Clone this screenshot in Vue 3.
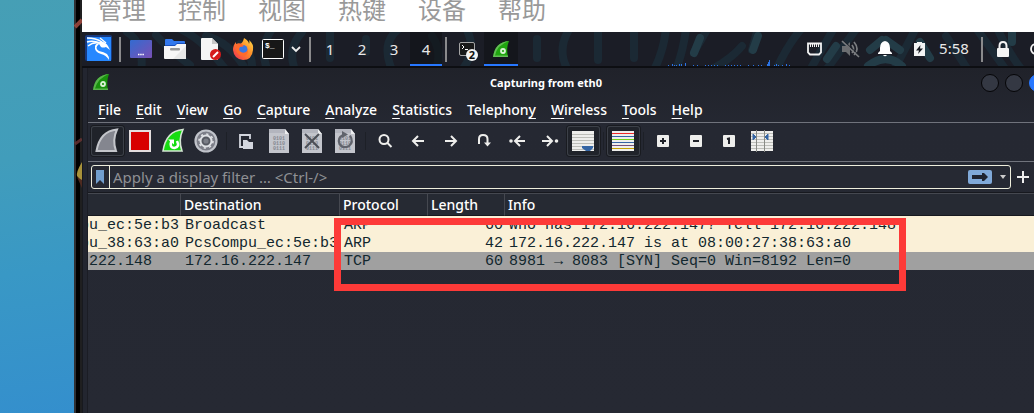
<script setup>
import { ref } from 'vue'

const hostMenu = ['管理', '控制', '视图', '热键', '设备', '帮助']
const workspaces = [1, 2, 3, 4]
const activeWorkspace = ref(4)
const filter = ref('')

const menus = [
  'File', 'Edit', 'View', 'Go', 'Capture', 'Analyze',
  'Statistics', 'Telephony', 'Wireless', 'Tools', 'Help'
].map((label) => {
  const at = label === 'Telephony' ? 8 : 0
  return { label, before: label.slice(0, at), key: label[at], after: label.slice(at + 1) }
})

const packets = [
  { kind: 'arp', source: 'PcsCompu_ec:5e:b3', destination: 'Broadcast', protocol: 'ARP', length: 60, info: 'Who has 172.16.222.147? Tell 172.16.222.148' },
  { kind: 'arp', source: 'PcsCompu_38:63:a0', destination: 'PcsCompu_ec:5e:b3', protocol: 'ARP', length: 42, info: '172.16.222.147 is at 08:00:27:38:63:a0' },
  { kind: 'tcp', source: '172.16.222.148', destination: '172.16.222.147', protocol: 'TCP', length: 60, info: '8981 → 8083 [SYN] Seq=0 Win=8192 Len=0' }
]

const stripes = ['#ef2929', '#3465a4', '#73d216', '#3465a4', '#75507b', '#c4a000']

const load = [
  [0, 1], [4, 2], [6, 1], [8, 1], [11, 2], [13, 2], [17, 3], [25, 1], [29, 1], [37, 1], [40, 1], [43, 1],
  [46, 1], [49, 1], [57, 1], [60, 1], [63, 1], [66, 1], [69, 1], [72, 1], [80, 1], [85, 1], [90, 1], [93, 1],
  [99, 2], [100, 4], [101, 6], [106, 1], [108, 2], [110, 1], [114, 1], [118, 2], [121, 1]
]
</script>

<template>
  <div class="screen">
    <div class="desktop"></div>
    <div class="bezel">
      <svg width="8" height="413" aria-hidden="true">
        <path d="M1 27 L8 20" stroke="#a44a40" stroke-width="4" opacity=".85" />
        <path d="M1 144 L8 139" stroke="#6d3535" stroke-width="3" opacity=".8" />
        <path d="M8 162 Q2 172 3 176 Q7 180 8 186 Z" fill="#a8923a" />
        <path d="M3 177 L8 180 V188 Z" fill="#4d2a20" />
      </svg>
    </div>
    <div class="vm">
      <nav class="host-menu" aria-label="虚拟机">
        <button v-for="m in hostMenu" :key="m" type="button">{{ m }}</button>
      </nav>

      <div class="panel">
        <svg class="wallpaper" viewBox="0 0 952 34" preserveAspectRatio="xMinYMin slice" aria-hidden="true">
          <g fill="none" stroke-linecap="round" stroke-width="8">
            <g stroke="#1b2934">
              <path d="M45 0 q18 12 14 40M74 3 q12 14 34 30M96 -4 q24 10 48 42M124 4 q24 6 40 34M158 12 q14 10 12 28M190 -3 q-14 20 -4 42M220 0 q-16 18 -6 40" />
              <path d="M248 -4 V26M284 7 V20M318 -4 q-20 14 -8 42M350 4 q12 18 2 36M384 -4 q12 22 -4 42M455 7 V26M488 -4 q-14 22 -2 42M516 -4 V28" />
              <path d="M552 -4 V26M584 -4 q-2 22 -12 42M604 -4 q-2 20 -10 42M626 -4 L612 20M676 -4 L670 18M660 14 q-10 12 -28 22M720 -4 q-14 16 -26 42M752 -4 L728 38M775 -4 L744 38" />
              <path d="M834 -4 L812 38M864 4 L886 38M894 -4 L924 38M916 -2 q10 22 24 40" />
            </g>
            <g stroke="#233c47">
              <path d="M612 21 L618 6M671 18 L676 4M745 27 L754 14M788 18 L800 8 M804 8 L818 18M786 34 q18 -14 34 0M848 26 L838 10M930 -4 V10" />
            </g>
          </g>
        </svg>
        <div class="panel-row">
          <button class="kali" type="button" aria-label="Applications">
            <svg width="34" height="34" viewBox="0 0 34 34">
              <rect x="3" y="3" width="27" height="26" rx="2" fill="#1555d6" opacity=".5" />
              <rect x="5" y="5" width="24" height="24" fill="#2788ff" />
              <path d="M5 6 Q14 6 20 10M5 10 Q11 8 18 11M6 14 Q11 10 17 11" fill="none" stroke="#fff" stroke-width="1.4" />
              <path d="M18 9 Q24 10 26 14 L28 18 L24 15 Q21 16 19 15 L17 12 Q12 16 17 19 Q22 20 25 22 Q27 24 27 28 Q24 23 19 22 Q12 20 13 14 Q14 11 18 11 Z" fill="#fff" />
              <path d="M18 6 L24 11" stroke="#fff" stroke-width="1.4" />
            </svg>
          </button>
          <span class="sep"></span>
          <button class="launcher" type="button" aria-label="Show desktop">
            <svg width="33" height="34" viewBox="0 0 33 34">
              <defs><linearGradient id="desk" x2="1" y2="1"><stop stop-color="#336bd0" /><stop offset="1" stop-color="#7950b5" /></linearGradient></defs>
              <rect x="6" y="8" width="22" height="18" rx="1" fill="url(#desk)" />
              <path d="M14 22.5h6" stroke="#fff" stroke-width="1.5" stroke-dasharray="1.5 .7" />
            </svg>
          </button>
          <button class="launcher" type="button" aria-label="Files">
            <svg width="33" height="34" viewBox="0 0 33 34">
              <path d="M8 8 Q8 7 9 7 H15 L17 9 H27 Q28 9 28 10 V15 H8 Z" fill="#3379ed" />
              <path d="M8 13 H18 L20 11 H28 V14 H8 Z" fill="#1950bd" />
              <path d="M7 14 H18 L20 12 H29 V26 Q29 27 28 27 H8 Q7 27 7 26 Z" fill="#f7f7f7" />
              <path d="M29 14 V27 H16 Z" fill="#e8e8e8" />
              <rect x="13" y="16" width="10" height="2.5" rx="1" fill="#999" />
            </svg>
          </button>
          <button class="launcher" type="button" aria-label="Text editor">
            <svg width="33" height="34" viewBox="0 0 33 34">
              <path d="M12 6 H22 L28 12 V28 H12 Q11 28 11 27 V7 Q11 6 12 6 Z" fill="#f5f5f5" />
              <path d="M22 6 L28 12 H22 Z" fill="#c8c8c8" />
              <circle cx="25.500" cy="22.500" r="5.500" fill="#d51b1b" />
              <path d="M23 25 L28 20" stroke="#fff" stroke-width="2" />
            </svg>
          </button>
          <button class="launcher" type="button" aria-label="Firefox">
            <svg width="33" height="34" viewBox="0 0 33 34">
              <defs><linearGradient id="fox" x1="1" y1="0" x2="0" y2="1"><stop stop-color="#ffe34a" /><stop offset=".45" stop-color="#ff8a28" /><stop offset="1" stop-color="#f02c55" /></linearGradient></defs>
              <path d="M21 6 Q26 9 26 12 Q27 10 26 8 Q31 12 30 18 Q29 28 20 28 Q11 27 10 18 Q10 13 13 10 V13 Q15 11 17 12 Q20 11 21 6 Z" fill="url(#fox)" />
              <circle cx="20" cy="17.500" r="4.500" fill="#3977e2" />
              <path d="M13 12 Q18 10 21 14 Q19 15 17 15 Q15 18 18 20 Q22 22 25 18 Q25 24 19 24 Q13 22 13 16 Z" fill="#ff6a2b" />
            </svg>
          </button>
          <button class="launcher" type="button" aria-label="Terminal">
            <svg width="33" height="34" viewBox="0 0 33 34">
              <rect x="6.500" y="7.500" width="21" height="19" rx="1" fill="#171717" stroke="#fff" />
              <text x="9" y="16" class="prompt">$_</text>
            </svg>
          </button>
          <button class="chevron" type="button" aria-label="More terminals">
            <svg width="17" height="34" viewBox="0 0 17 34"><path d="M3 15 L7 19 L11 15" fill="none" stroke="#eee" stroke-width="1.800" /></svg>
          </button>
          <span class="sep"></span>
          <button v-for="n in workspaces" :key="n" type="button" class="workspace" :class="{ active: n === activeWorkspace }" @click="activeWorkspace = n">{{ n }}</button>
          <span class="sep"></span>
          <button class="task" type="button" aria-label="Terminal windows, 2">
            <svg width="34" height="34" viewBox="0 0 34 34">
              <rect x="9.500" y="10.500" width="15" height="13" rx="1.500" fill="#191919" stroke="#a5a5a5" />
              <path d="M12 13 L14 15 L12 17M15 17.500h3" stroke="#fff" fill="none" />
              <circle cx="22" cy="23" r="6" fill="#f4f4f4" />
              <text x="22" y="27" text-anchor="middle" class="count">2</text>
            </svg>
          </button>
          <button class="task active" type="button" aria-label="Capturing from eth0">
            <svg width="34" height="34" viewBox="0 0 34 34">
              <path d="M9 25 Q11 10 25 9 Q22 16 24 25 Z" fill="#20a510" />
              <path d="M9 25 Q11 10 25 9 Q13 13 11 23.500 H24 V25 Z" fill="#63bd55" />
              <circle cx="19" cy="19" r="2" fill="none" stroke="#d8f2d4" stroke-width="1.800" />
            </svg>
          </button>

          <div class="tray">
            <svg class="graph" width="129" height="34" viewBox="0 0 129 34" role="img" aria-label="CPU load">
              <rect v-for="[x, h] in load" :key="x" :x="x" :y="34 - h" width="1" :height="h" fill="#2a72e4" />
            </svg>
            <svg width="35" height="34" viewBox="0 0 35 34" role="img" aria-label="Network">
              <path d="M11 11.500h13v9l-2 2h-9l-2-2z" fill="none" stroke="#f2f2f2" stroke-width="1.800" />
              <path d="M13.500 12v3M15.500 12v3M17.500 12v3M19.500 12v3M21.500 12v3" stroke="#f2f2f2" />
            </svg>
            <svg width="35" height="34" viewBox="0 0 35 34" role="img" aria-label="Muted">
              <g fill="none" stroke="#7b7d80" stroke-width="1.700">
                <path d="M20 13 Q23 17 20 21M22 10 Q28 17 22 23" />
                <path d="M10 9 L27 25" />
              </g>
              <path d="M10 14 H14 L18 10 V24 L14 20 H10 Z" fill="#6c6e71" />
              <path d="M11 8 L28 24" stroke="#1d222a" />
            </svg>
            <svg width="35" height="34" viewBox="0 0 35 34" role="img" aria-label="Notifications">
              <path d="M18 9 Q23 10 23 16 V19 L25 21 V22 H11 V21 L13 19 V16 Q13 10 18 9 Z" fill="#fff" />
              <path d="M16 23 H20 Q18 25.500 16 23 Z" fill="#fff" />
            </svg>
            <svg width="35" height="34" viewBox="0 0 35 34" role="img" aria-label="Battery charging">
              <path d="M12 11h3v-1h5v1h3v13H12z" fill="#f4f4f4" />
              <path d="M18.500 13 L14 18.500 H17 L16 22 L21 16.500 H18 Z" fill="#171a21" />
            </svg>
            <time class="clock">5:58</time>
            <span class="sep wide"></span>
            <svg width="20" height="34" viewBox="0 0 20 34" role="img" aria-label="Lock screen">
              <path d="M6.500 17 V14 Q6.500 10 10 10 Q13.500 10 13.500 14 V17" fill="none" stroke="#f4f4f4" stroke-width="2" />
              <rect x="4" y="16" width="12" height="9" rx="1" fill="#f4f4f4" />
            </svg>
            <svg width="21" height="34" viewBox="0 0 21 34" role="img" aria-label="Log out"><circle cx="23" cy="17" r="5" fill="none" stroke="#f4f4f4" stroke-width="1.800" /></svg>
          </div>
        </div>
      </div>

      <main class="window">
        <header class="titlebar">
          <svg class="app-icon" width="18" height="18" viewBox="0 0 18 18" aria-hidden="true">
            <path d="M1 16 Q3 1 17 0 Q14 8 16 16 Z" fill="#18910c" />
            <path d="M1 16 Q3 1 17 0 Q6 4 3 14.500 H16 V16 Z" fill="#58b34b" />
            <circle cx="11" cy="10" r="2" fill="none" stroke="#d8f2d4" stroke-width="1.800" />
          </svg>
          <h1>Capturing from eth0</h1>
          <div class="controls">
            <button type="button" aria-label="Minimize"></button>
            <button type="button" aria-label="Maximize"></button>
            <button type="button" class="close" aria-label="Close"></button>
          </div>
        </header>

        <nav class="menubar" aria-label="Main menu">
          <button v-for="m in menus" :key="m.label" type="button">{{ m.before }}<u>{{ m.key }}</u>{{ m.after }}</button>
        </nav>

        <div class="toolbar" role="toolbar" aria-label="Capture tools">
          <button type="button" class="framed" aria-label="Start capture">
            <svg width="33" height="32" viewBox="0 0 33 32">
              <path d="M5.500 26 Q9 6 26 4.500 Q21 15 25 26 Z" fill="#84868f" stroke="#c4c6cb" stroke-width="2" />
            </svg>
          </button>
          <button type="button" aria-label="Stop capture">
            <svg width="33" height="32" viewBox="0 0 33 32"><rect x="6" y="6" width="20" height="20" fill="#d80000" stroke="#e4dede" stroke-width="2" /></svg>
          </button>
          <button type="button" aria-label="Restart capture">
            <svg width="33" height="32" viewBox="0 0 33 32">
              <path d="M6 26 Q9 6 26 4.500 Q21 15 25 26 Z" fill="#17dc11" stroke="#d4e5d3" stroke-width="1.600" />
              <path d="M14.500 15.500 Q12 23 17.500 23 Q23 22 20 16" fill="none" stroke="#fff" stroke-width="2.600" />
              <path d="M11 14.500h6v5z" fill="#fff" />
            </svg>
          </button>
          <button type="button" aria-label="Capture options">
            <svg width="33" height="32" viewBox="0 0 33 32">
              <circle cx="16" cy="16" r="10.500" fill="#7c7e88" stroke="#c0c3ca" stroke-width="2.200" />
              <circle cx="16" cy="16" r="5.500" fill="#565962" stroke="#dfe1e5" stroke-width="2" />
              <circle cx="16" cy="16" r="7" fill="none" stroke="#dfe1e5" stroke-width="1.600" stroke-dasharray="2.200 3.300" />
              <circle cx="16" cy="16" r="2.600" fill="#7b7e87" />
            </svg>
          </button>
          <i class="gap"></i>
          <button type="button" aria-label="Open">
            <svg width="33" height="32" viewBox="0 0 33 32">
              <path d="M13 22 H10 V10 H20 V14" fill="none" stroke="#d3d6de" stroke-width="1.800" />
              <path d="M13 15 H17 L19 17 H23 V24 H13 Z" fill="#d3d6de" />
            </svg>
          </button>
          <button v-for="doc in ['Save', 'Close file', 'Reload']" :key="doc" type="button" :aria-label="doc">
            <svg width="33" height="32" viewBox="0 0 33 32">
              <path d="M6 4 H22 L26 9 V28 H6 Z" fill="#c3c5cc" />
              <path d="M22 4 L26 9 H22 Z" fill="#ecedef" />
              <rect x="6" y="4" width="16" height="4" fill="#b3b5be" />
              <g class="bits" text-anchor="middle">
                <text x="16" y="15">0101</text>
                <text x="16" y="20">0110</text>
                <text x="16" y="25">0111</text>
              </g>
              <path v-if="doc === 'Close file'" d="M9 9 L23 23M23 9 L9 23" stroke="#4c4f57" stroke-width="2" />
              <path v-if="doc === 'Reload'" d="M21 10.500 Q25 17 20 21 Q14 24 10.500 19 Q8 13 14 10" fill="none" stroke="#60636c" stroke-width="2.200" />
              <path v-if="doc === 'Reload'" d="M13 6 L19 9.500 L13 13 Z" fill="#60636c" />
            </svg>
          </button>
          <i class="gap"></i>
          <button type="button" aria-label="Find">
            <svg width="33" height="32" viewBox="0 0 33 32"><circle cx="15" cy="14.500" r="4.500" /><path d="M18 17.500 L22.500 22" /></svg>
          </button>
          <button type="button" aria-label="Previous packet">
            <svg width="33" height="32" viewBox="0 0 33 32"><path d="M22 16 H11M16 11 L11 16 L16 21" /></svg>
          </button>
          <button type="button" aria-label="Next packet">
            <svg width="33" height="32" viewBox="0 0 33 32"><path d="M10 16 H21M16 11 L21 16 L16 21" /></svg>
          </button>
          <button type="button" aria-label="Go to packet">
            <svg width="33" height="32" viewBox="0 0 33 32"><path d="M11 19 V14 Q11 10 15 10 Q19.500 10 19.500 14 V19" /><path d="M16 17.500 H23 L19.500 21.500 Z" class="solid" /></svg>
          </button>
          <button type="button" aria-label="First packet">
            <svg width="33" height="32" viewBox="0 0 33 32"><path d="M24 16 H14M19 11 L14 16 L19 21" /><circle cx="10" cy="16" r="1.800" class="solid" /></svg>
          </button>
          <button type="button" aria-label="Last packet">
            <svg width="33" height="32" viewBox="0 0 33 32"><path d="M8 16 H18M13 11 L18 16 L13 21" /><circle cx="22.500" cy="16" r="1.800" class="solid" /></svg>
          </button>
          <button type="button" class="framed" aria-label="Auto scroll">
            <svg width="33" height="32" viewBox="0 0 33 32">
              <rect x="5" y="6" width="22" height="20" class="solid" />
              <path d="M5 9.500h22M5 12.500h22M5 15.500h22M5 18.500h22M5 21.500h22M5 24.500h22" class="rules" />
              <path d="M15 21 H26 V23 L23 26 H19 L15 23 Z" fill="#3465a4" stroke="none" />
            </svg>
          </button>
          <i class="gap"></i>
          <button type="button" class="framed" aria-label="Colorize">
            <svg width="33" height="32" viewBox="0 0 33 32">
              <rect x="5" y="6" width="22" height="20" class="solid" />
              <rect v-for="(color, i) in stripes" :key="i" x="5" :y="8 + i * 3" width="22" height="1" :fill="color" />
            </svg>
          </button>
          <i class="gap"></i>
          <button type="button" aria-label="Zoom in">
            <svg width="33" height="32" viewBox="0 0 33 32"><rect x="10" y="10" width="12" height="12" rx="1" class="solid" /><path d="M13 16h6M16 13v6" class="dark" /></svg>
          </button>
          <button type="button" aria-label="Zoom out">
            <svg width="33" height="32" viewBox="0 0 33 32"><rect x="10" y="10" width="12" height="12" rx="1" class="solid" /><path d="M13 16h6" class="dark" /></svg>
          </button>
          <button type="button" aria-label="Normal size">
            <svg width="33" height="32" viewBox="0 0 33 32"><rect x="10" y="10" width="12" height="12" rx="1" class="solid" /><path d="M14 14 L16 13.500 V19" class="dark" /></svg>
          </button>
          <button type="button" aria-label="Resize columns">
            <svg width="33" height="32" viewBox="0 0 33 32">
              <rect x="5" y="6" width="22" height="20" class="solid" />
              <path d="M5 8.500h22M5 11.500h22M5 14.500h22M5 17.500h22M5 20.500h22M5 23.500h22" class="rules" />
              <path d="M10.500 5v22M18.500 5v22" stroke="#888a85" stroke-width="1" />
              <path d="M7 9 L10 12 L7 15 ZM22 9 L19 12 L22 15 Z" fill="#3465a4" stroke="#3465a4" stroke-width="1" />
            </svg>
          </button>
        </div>

        <form class="filter-row" @submit.prevent>
          <div class="filter">
            <button type="button" class="bookmark" aria-label="Saved filters">
              <svg width="17" height="20" viewBox="0 0 17 20"><path d="M4 3h8v14l-4-4-4 4z" fill="#729fcf" /></svg>
            </button>
            <input v-model="filter" type="text" aria-label="Display filter" placeholder="Apply a display filter … &lt;Ctrl-/&gt;" />
            <button type="submit" class="apply" aria-label="Apply filter">
              <svg width="24" height="14" viewBox="0 0 24 14"><rect width="24" height="14" rx="2" fill="#80a9d8" /><path d="M4 5h10V3h2l4 4-4 4h-2V9H4z" fill="#1f2430" /></svg>
            </button>
            <button type="button" class="history" aria-label="Recent filters">
              <svg width="10" height="10" viewBox="0 0 10 10"><path d="M2 3h6L5 7z" fill="#ccc" /></svg>
            </button>
          </div>
          <button type="button" class="add" aria-label="Add filter button">
            <svg width="14" height="14" viewBox="0 0 14 14"><path d="M7 1v12M1 7h12" stroke="#eee" stroke-width="2" /></svg>
          </button>
        </form>

        <section class="packets">
          <table>
            <colgroup><col class="c-src" /><col class="c-dst" /><col class="c-proto" /><col class="c-len" /><col /></colgroup>
            <thead>
              <tr><th aria-label="Source"></th><th>Destination</th><th>Protocol</th><th>Length</th><th>Info</th></tr>
            </thead>
            <tbody>
              <tr v-for="p in packets" :key="p.info" :class="p.kind">
                <td class="src">{{ p.source }}</td>
                <td>{{ p.destination }}</td>
                <td>{{ p.protocol }}</td>
                <td class="len">{{ p.length }}</td>
                <td>{{ p.info }}</td>
              </tr>
            </tbody>
          </table>
          <div class="marker"></div>
        </section>
      </main>
    </div>
  </div>
</template>

<style>
body { margin: 0; overflow: hidden; }
</style>

<style scoped>
* { box-sizing: border-box; }
svg { display: block; }
button { margin: 0; padding: 0; border: 0; background: none; color: inherit; font: inherit; }
.screen { display: flex; min-height: 100vh; background: #262933; font: 15px/20px "Noto Sans", "Noto Sans CJK SC", sans-serif; color: #fff; }
.desktop { flex: none; width: 74px; background: linear-gradient(172deg, #469fb5 0%, #419dbb 38%, #3998c5 65%, #348fcd 100%); }
.bezel { flex: none; width: 8px; background: linear-gradient(90deg, #303033 0 2px, #000 2px 6px, #1f1f20 6px); }
.vm { flex: 1; min-width: 0; display: flex; flex-direction: column; }

.host-menu { display: flex; gap: 32px; height: 32px; padding-left: 16px; overflow: hidden; background: #fff; color: #999; font: 400 24px/18px "Noto Sans CJK SC", sans-serif; }
.host-menu button { height: 18px; white-space: nowrap; }

.panel { position: relative; height: 36px; overflow: hidden; background: #1b1d26; border-bottom: 2px solid #0d0e12; }
.wallpaper { position: absolute; inset: 0; width: 100%; height: 34px; }
.panel-row { position: relative; display: flex; height: 34px; }
.sep { flex: none; width: 8px; background: linear-gradient(#8a8a8c, #8a8a8c) center / 2px 25px no-repeat; }
.sep.wide { width: 22px; }
.workspace { flex: none; width: 32px; height: 34px; font-size: 15px; color: #e8e8e8; }
.task { flex: none; width: 34px; height: 34px; }
.active { background: rgba(16, 18, 22, .6); box-shadow: inset 0 -2px #2777ff; }
.tray { display: flex; margin-left: auto; }
.clock { display: flex; justify-content: center; width: 34px; font-size: 15px; line-height: 33px; color: #e8e8e8; }
.prompt { font: bold 8px "Liberation Mono", monospace; fill: #fff; }
.count { font: bold 11px "Noto Sans", sans-serif; fill: #111; }

.window { flex: 1; padding-left: 6px; background: linear-gradient(90deg, #17191f 0 1px, #232630 1px 5px, #1b1d25 5px 6px, transparent 6px), linear-gradient(#20222a, #252832 60px, #262933); }
.titlebar { display: grid; grid-template-columns: 72px 1fr 72px; align-items: center; height: 30px; padding-left: 4px; }
h1 { margin: 0; padding-right: 34px; font-size: 11px; line-height: 16px; font-weight: 700; text-align: center; }
.controls { display: flex; gap: 6px; padding-left: 19px; overflow: hidden; }
.controls button { flex: none; width: 18px; height: 18px; border: 1px solid #050507; border-radius: 50%; background: #343843; }
.controls .close { background: #2777ff; border-color: #2777ff; }

.menubar { display: flex; gap: 15px; height: 24px; padding-left: 10px; font-size: 14px; line-height: 22px; font-weight: 500; }
.menubar button { height: 24px; white-space: nowrap; }
.menubar u { text-underline-offset: 3px; text-decoration-thickness: 1px; }

.toolbar { display: flex; align-items: flex-start; height: 40px; padding: 3px 0 0 3px; border-top: 1px solid #70737c; border-bottom: 1px solid #70737c; }
.toolbar button { flex: none; width: 33px; height: 30px; }
.toolbar svg { margin: -1px 0; fill: none; stroke-width: 2; }
.toolbar .framed { background: #20232a; border-radius: 3px; box-shadow: inset 0 0 0 1px #3c4048, 0 0 0 1px #191b20; }
.toolbar button:nth-of-type(n + 9):nth-of-type(-n + 14) svg { stroke: #eeeeec; }
.toolbar .solid { fill: #eeeeec; stroke: none; }
.toolbar .rules { stroke: #bdbeb9; stroke-width: 1; }
.toolbar .dark { stroke: #202229; stroke-width: 2; }
.bits { font: bold 5px "Liberation Mono", monospace; fill: #858891; }
.gap { flex: none; width: 7px; height: 18px; margin-top: 6px; background: linear-gradient(#1d2027, #1d2027) center / 1px 100% no-repeat; }

.filter-row { display: flex; align-items: center; height: 30px; padding: 0 4px 0 3px; }
.filter { flex: 1; min-width: 0; display: flex; align-items: center; height: 24px; border: 1px solid #eeeedd; border-radius: 3px; background: #262933; }
.bookmark { width: 18px; height: 22px; border-right: 1px solid #eeeedd; }
.filter input { flex: 1; min-width: 0; height: 22px; padding: 0 3px; border: 0; outline: 0; background: none; color: #fff; font: 15px/20px "Noto Sans", sans-serif; }
.filter input::placeholder { color: #8f9094; opacity: 1; }
.history { width: 10px; margin: 0 2px 0 6px; }
.add { flex: none; margin-left: 5px; }

.packets { position: relative; border-top: 1px solid #17191f; }
table { width: 100%; table-layout: fixed; border-collapse: separate; border-spacing: 0; }
.c-src { width: 93px; }
.c-dst { width: 159px; }
.c-proto { width: 88px; }
.c-len { width: 77px; }
th { height: 23px; padding: 1px 3px 0; border-top: 1px solid #454850; border-right: 1px solid #454850; border-bottom: 1px solid #17191f; background: #262a33; font-size: 14px; line-height: 20px; font-weight: 500; text-align: left; }
th:last-child { border-right: 0; }
td { height: 18px; padding: 1px 0 0 4px; overflow: hidden; white-space: nowrap; font: 15px/17px "Liberation Mono", monospace; color: #12272e; }
td.src { padding-left: 0; text-indent: -62px; }
td.len { padding: 1px 2px 0 0; text-align: right; }
.arp td { background: #faf0d7; }
.tcp td { background: #a0a0a0; }
.marker { position: absolute; left: 246px; top: 25px; width: 572px; height: 73px; border: 7px solid #fd3a38; pointer-events: none; }
</style>
